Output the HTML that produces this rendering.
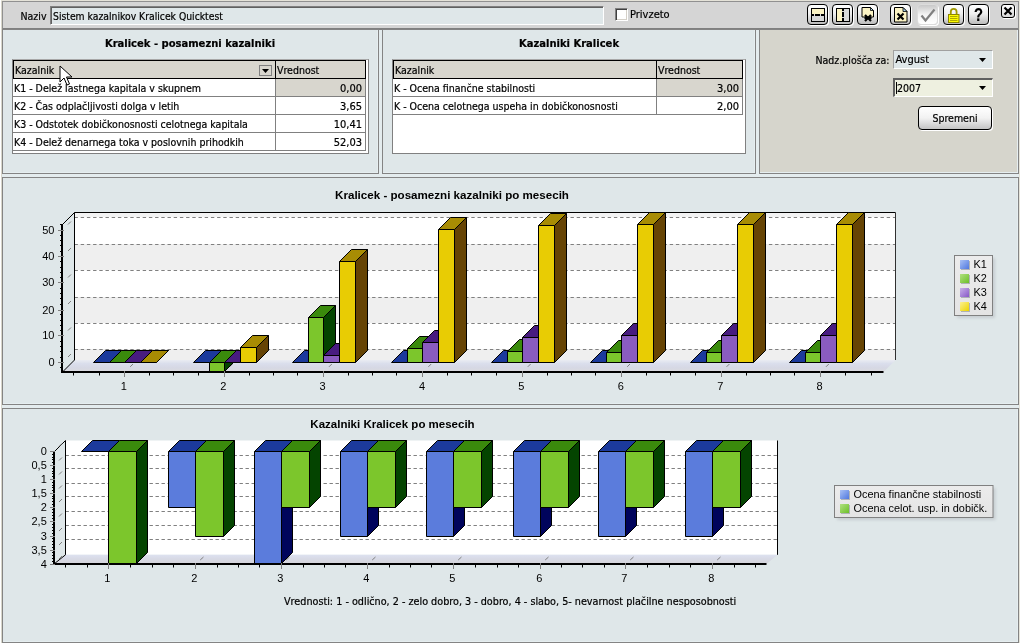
<!DOCTYPE html>
<html lang="sl"><head><meta charset="utf-8"><title>Sistem kazalnikov Kralicek Quicktest</title>
<style>
html,body{margin:0;padding:0}
body{width:1020px;height:643px;overflow:hidden;background:#d8d6ca;position:relative;font-family:"DejaVu Sans Condensed","Liberation Sans",sans-serif;font-size:10.5px;color:#000;-webkit-text-stroke:0.2px #000}
div{position:absolute;box-sizing:border-box;white-space:nowrap}
#root{left:0;top:0;width:1020px;height:643px;will-change:transform;overflow:hidden}
.panel{background:#dfe7e9;border:1px solid #848484;box-shadow:inset -1px -1px 0 #e6eef0}
.ttl{font-weight:bold;font-size:11.1px;text-align:center;font-family:"DejaVu Sans Condensed","Liberation Sans",sans-serif}
.grid{background:#fff;border:1px solid #808080;border-top-color:#a8a8a8}
.hd{background:#d8d6ce;border:1px solid #000;height:19px;line-height:18px;padding-left:1px}
.row{height:18px;line-height:19px;border-bottom:1px solid #808080;border-right:1px solid #808080;background:#fff;padding-left:1px}
.num{text-align:right;padding-right:3px;font-size:11px}
.tb{top:4px;width:21px;height:21px;border:1px solid #000;border-radius:4px;background:linear-gradient(#ffffff,#f0f0f0 45%,#bcbcbc);box-shadow:1px 1px 0 #fff}
.tb.dis{border-color:#dcdcdc;background:linear-gradient(#c8c8c8,#f4f4f4 50%,#fff)}
.tb svg{position:absolute;left:-1px;top:-1px}
.q{left:0;top:0;width:19px;height:19px;text-align:center;font:bold 18px/20px "Liberation Sans",sans-serif;transform:scaleX(0.82)}
.combo{height:19px;border:1px solid;border-color:#a0a0a0 #fff #fff #a0a0a0;line-height:18px;padding-left:2px}
</style></head><body><div id="root">

<div style="left:0;top:0;width:1px;height:643px;background:#fff"></div><div style="left:1px;top:0;width:1019px;height:1px;background:#e4e2d8"></div><div style="left:1019px;top:0;width:1px;height:643px;background:#e6e4da"></div><div style="left:2px;top:29px;width:1017px;height:614px;background:#e4ecee"></div><div style="left:2px;top:1px;width:1017px;height:29px;background:#d5d5d5;border:1px solid #909090;border-bottom:2px solid #808080"></div>
<div style="left:20.5px;top:9px;line-height:14px">Naziv</div>
<div style="left:50px;top:6px;width:554px;height:19px;background:#dfe7e9;border:1px solid;border-color:#808080 #fff #fff #808080;box-shadow:inset 1px 1px 0 #606060;line-height:18px;padding-left:2px;font-size:10.3px">Sistem kazalnikov Kralicek Quicktest</div>
<div style="left:615px;top:8px;width:13px;height:13px;background:#fff;border:1px solid;border-color:#808080 #fff #fff #808080;box-shadow:inset 1px 1px 0 #404040,inset -1px -1px 0 #d4d0c8"></div>
<div style="left:630px;top:8px;line-height:14px;font-size:11px">Privzeto</div>
<div class="tb" style="left:807px"><svg width="21" height="21" viewBox="0 0 21 21"><rect x="4.5" y="4.5" width="13" height="13" fill="#d8d8d8" stroke="#000"/><rect x="5" y="5" width="12" height="5" fill="#fbf3c4"/><path d="M5 11h2M8 11h5M14 11h3" stroke="#000" stroke-width="2" fill="none"/></svg></div>
<div class="tb" style="left:832px"><svg width="21" height="21" viewBox="0 0 21 21"><rect x="4.5" y="4.5" width="13" height="13" fill="#d8d8d8" stroke="#000"/><rect x="5" y="5" width="5" height="12" fill="#fbf3c4"/><path d="M11 5v2M11 8v5M11 14v3" stroke="#000" stroke-width="2" fill="none"/></svg></div>
<div class="tb" style="left:857px"><svg width="21" height="21" viewBox="0 0 21 21"><path d="M5 3.5h8.5l3 3v6.5h-11.5z" fill="#fbf3c4" stroke="#000"/><path d="M13.5 3.5v3h3z" fill="#a8d4ec" stroke="#000" stroke-width="0.8"/><path d="M8 11l6 6M14 11l-6 6M7.5 14h7" stroke="#000" stroke-width="2.2" fill="none"/></svg></div>
<div class="tb" style="left:890px"><svg width="21" height="21" viewBox="0 0 21 21"><path d="M4.5 3.5h8.5l4 4v10.5h-12.5z" fill="#fbf3c4" stroke="#000"/><path d="M13 3.5v4h4z" fill="#a8d4ec" stroke="#000" stroke-width="0.8"/><path d="M7.5 9.5l6 6M13.5 9.5l-6 6" stroke="#000" stroke-width="2.2" fill="none"/></svg></div>
<div class="tb dis" style="left:917px"><svg width="21" height="21" viewBox="0 0 21 21"><path d="M4.5 11.5l4 5L17.5 5.5" stroke="#808080" stroke-width="2.2" fill="none"/></svg></div>
<div class="tb" style="left:943px"><svg width="21" height="21" viewBox="0 0 21 21"><path d="M7.8 11V7.8a2.9 2.9 0 0 1 5.8 0V11" stroke="#a09800" stroke-width="1.8" fill="none"/><rect x="5.5" y="10.5" width="10.5" height="8" fill="#fcfc00" stroke="#8c8400" stroke-width="1"/><path d="M7 12.5h7.5M7 14.5h7.5M7 16.5h7.5" stroke="#b0a800" stroke-width="1"/></svg></div>
<div class="tb" style="left:968px"><div class="q">?</div></div>
<div style="left:1001px;top:4px;width:14px;height:14px;border:1px solid #000;border-radius:3px;background:linear-gradient(#fff,#d8d8d8);box-shadow:1px 1px 0 #fff"><svg width="12" height="12" viewBox="0 0 12 12" style="position:absolute;left:0;top:0"><path d="M2.5 2.5l7 7M9.5 2.5l-7 7" stroke="#000" stroke-width="2.2"/></svg></div>
<div class="panel" style="left:2px;top:29px;width:377px;height:145px"></div>
<div class="ttl" style="left:2px;top:37px;width:376px;line-height:14px">Kralicek - posamezni kazalniki</div>
<div class="grid" style="left:12px;top:59px;width:357px;height:95px"></div>
<div class="hd" style="left:13px;top:60px;width:263px">Kazalnik</div>
<div style="left:259px;top:65px;width:13px;height:11px;border:1px solid #808080;background:#d8d6ce"><svg width="11" height="9" style="position:absolute;left:0;top:0"><path d="M2 3h7l-3.5 4z" fill="#000"/></svg></div>
<div class="hd" style="left:275px;top:60px;width:91px;border-left-width:1px">Vrednost</div>
<div class="row" style="left:13px;top:79px;width:263px">K1 - Delež lastnega kapitala v skupnem</div>
<div class="row num" style="left:276px;top:79px;width:90px;background:#d8d6ce">0,00</div>
<div class="row" style="left:13px;top:97px;width:263px">K2 - Čas odplačljivosti dolga v letih</div>
<div class="row num" style="left:276px;top:97px;width:90px">3,65</div>
<div class="row" style="left:13px;top:115px;width:263px">K3 - Odstotek dobičkonosnosti celotnega kapitala</div>
<div class="row num" style="left:276px;top:115px;width:90px">10,41</div>
<div class="row" style="left:13px;top:133px;width:263px">K4 - Delež denarnega toka v poslovnih prihodkih</div>
<div class="row num" style="left:276px;top:133px;width:90px">52,03</div>
<svg style="position:absolute;left:59px;top:65px" width="14" height="22" viewBox="0 0 14 22"><path d="M1 1v16l4-4 3 7 2.5-1-3-7h5.5z" fill="#fff" stroke="#000" stroke-width="1"/></svg>
<div class="panel" style="left:382px;top:29px;width:374px;height:145px"></div>
<div class="ttl" style="left:382px;top:37px;width:374px;line-height:14px">Kazalniki Kralicek</div>
<div class="grid" style="left:392px;top:59px;width:354px;height:95px"></div>
<div class="hd" style="left:393px;top:60px;width:264px">Kazalnik</div>
<div class="hd" style="left:656px;top:60px;width:87px;border-left-width:1px">Vrednost</div>
<div class="row" style="left:393px;top:79px;width:264px">K - Ocena finančne stabilnosti</div>
<div class="row num" style="left:657px;top:79px;width:86px;background:#d8d6ce">3,00</div>
<div class="row" style="left:393px;top:97px;width:264px">K - Ocena celotnega uspeha in dobičkonosnosti</div>
<div class="row num" style="left:657px;top:97px;width:86px">2,00</div>
<div class="panel" style="left:759px;top:29px;width:260px;height:145px;background:#d6d5cc"></div>
<div style="left:815.5px;top:53px;line-height:14px">Nadz.plošča za:</div>
<div class="combo" style="left:893px;top:50px;width:100px;background:#dfe7e9;font-size:11px;padding-left:1.5px">Avgust</div>
<div class="combo" style="left:893px;top:78px;width:100px;background:#eef0e0;border-color:#606060 #fff #fff #606060;border-width:2px 1px 1px 2px;line-height:17px;padding-left:1px"><span style="border-left:1px solid #000;margin-left:0">2007</span></div>
<svg style="position:absolute;left:979px;top:58px" width="9" height="6"><path d="M0 0h7l-3.5 4z" fill="#000"/></svg>
<svg style="position:absolute;left:979px;top:86px" width="9" height="6"><path d="M0 0h7l-3.5 4z" fill="#000"/></svg>
<div style="left:918px;top:106px;width:74px;height:24px;border:1px solid #000;border-radius:4px;background:linear-gradient(#fff,#f2f2f2 50%,#c4c4c4);box-shadow:1px 1px 0 #fff;text-align:center;line-height:23px;font-size:10.5px">Spremeni</div>
<div class="panel" style="left:2px;top:177px;width:1017px;height:228px"></div>
<div class="panel" style="left:2px;top:408px;width:1017px;height:235px"></div>
<svg style="position:absolute;left:0;top:0" width="1020" height="643" viewBox="0 0 1020 643" font-family='"Liberation Sans",sans-serif' shape-rendering="auto">
<defs><filter id="blur1" x="-20%" y="-20%" width="150%" height="150%"><feGaussianBlur stdDeviation="1.5"/></filter></defs>
<rect x="74.5" y="212.5" width="821.0" height="147.5" fill="#ffffff"/>
<rect x="74.5" y="212.50" width="821.0" height="4.50" fill="#f3f3f3"/>
<rect x="74.5" y="244.00" width="821.0" height="26.00" fill="#efefef"/>
<rect x="74.5" y="297.00" width="821.0" height="26.00" fill="#efefef"/>
<rect x="74.5" y="349.00" width="821.0" height="11.00" fill="#efefef"/>
<line x1="74.50" y1="349.50" x2="895.50" y2="349.50" stroke="#808080" stroke-width="1" stroke-dasharray="3.4 2.8"/>
<line x1="74.50" y1="323.50" x2="895.50" y2="323.50" stroke="#808080" stroke-width="1" stroke-dasharray="3.4 2.8"/>
<line x1="74.50" y1="297.50" x2="895.50" y2="297.50" stroke="#808080" stroke-width="1" stroke-dasharray="3.4 2.8"/>
<line x1="74.50" y1="270.50" x2="895.50" y2="270.50" stroke="#808080" stroke-width="1" stroke-dasharray="3.4 2.8"/>
<line x1="74.50" y1="244.50" x2="895.50" y2="244.50" stroke="#808080" stroke-width="1" stroke-dasharray="3.4 2.8"/>
<line x1="74.50" y1="217.50" x2="895.50" y2="217.50" stroke="#808080" stroke-width="1" stroke-dasharray="3.4 2.8"/>
<defs><linearGradient id="fl1" x1="0" y1="0" x2="0" y2="1"><stop offset="0" stop-color="#eaecf2"/><stop offset="0.3" stop-color="#dadeec"/><stop offset="0.65" stop-color="#d6d8e4"/><stop offset="1" stop-color="#dadade"/></linearGradient></defs>
<polygon points="62.00,372.00 74.50,360.00 895.50,360.00 883.50,372.00" fill="url(#fl1)" />
<line x1="74.50" y1="212.50" x2="895.50" y2="212.50" stroke="#000" stroke-width="1" />
<line x1="74.50" y1="212.50" x2="74.50" y2="360.00" stroke="#000" stroke-width="1" />
<line x1="895.50" y1="212.50" x2="895.50" y2="360.00" stroke="#303030" stroke-width="1" />
<line x1="62.50" y1="224.50" x2="74.50" y2="212.50" stroke="#000" stroke-width="1" />
<line x1="62.50" y1="372.00" x2="74.50" y2="360.00" stroke="#000" stroke-width="1" />
<line x1="68.00" y1="357.00" x2="71.00" y2="354.00" stroke="#808080" stroke-width="1" />
<line x1="68.00" y1="330.50" x2="71.00" y2="327.50" stroke="#808080" stroke-width="1" />
<line x1="68.00" y1="304.00" x2="71.00" y2="301.00" stroke="#808080" stroke-width="1" />
<line x1="68.00" y1="277.50" x2="71.00" y2="274.50" stroke="#808080" stroke-width="1" />
<line x1="68.00" y1="251.00" x2="71.00" y2="248.00" stroke="#808080" stroke-width="1" />
<line x1="68.00" y1="224.50" x2="71.00" y2="221.50" stroke="#808080" stroke-width="1" />
<line x1="130.20" y1="366.80" x2="133.00" y2="364.00" stroke="#808080" stroke-width="1" />
<line x1="229.60" y1="366.80" x2="232.40" y2="364.00" stroke="#808080" stroke-width="1" />
<line x1="329.00" y1="366.80" x2="331.80" y2="364.00" stroke="#808080" stroke-width="1" />
<line x1="428.40" y1="366.80" x2="431.20" y2="364.00" stroke="#808080" stroke-width="1" />
<line x1="527.80" y1="366.80" x2="530.60" y2="364.00" stroke="#808080" stroke-width="1" />
<line x1="627.20" y1="366.80" x2="630.00" y2="364.00" stroke="#808080" stroke-width="1" />
<line x1="726.60" y1="366.80" x2="729.40" y2="364.00" stroke="#808080" stroke-width="1" />
<line x1="826.00" y1="366.80" x2="828.80" y2="364.00" stroke="#808080" stroke-width="1" />
<polygon points="109.50,362.50 121.50,350.50 121.50,350.50 109.50,362.50" fill="#0a1a5c" stroke="#000" stroke-width="1" stroke-linejoin="round" />
<polygon points="93.50,362.50 105.50,350.50 121.50,350.50 109.50,362.50" fill="#1c3a9c" stroke="#000" stroke-width="1" stroke-linejoin="round" />
<polygon points="124.50,362.50 136.50,350.50 136.50,350.50 124.50,362.50" fill="#044400" stroke="#000" stroke-width="1" stroke-linejoin="round" />
<polygon points="109.50,362.50 121.50,350.50 136.50,350.50 124.50,362.50" fill="#3a8a0c" stroke="#000" stroke-width="1" stroke-linejoin="round" />
<polygon points="140.50,362.50 152.50,350.50 152.50,350.50 140.50,362.50" fill="#2a0c50" stroke="#000" stroke-width="1" stroke-linejoin="round" />
<polygon points="124.50,362.50 136.50,350.50 152.50,350.50 140.50,362.50" fill="#481c80" stroke="#000" stroke-width="1" stroke-linejoin="round" />
<polygon points="156.50,362.50 168.50,350.50 168.50,350.50 156.50,362.50" fill="#664404" stroke="#000" stroke-width="1" stroke-linejoin="round" />
<polygon points="140.50,362.50 152.50,350.50 168.50,350.50 156.50,362.50" fill="#a88c04" stroke="#000" stroke-width="1" stroke-linejoin="round" />
<polygon points="209.50,362.50 221.50,350.50 221.50,350.50 209.50,362.50" fill="#0a1a5c" stroke="#000" stroke-width="1" stroke-linejoin="round" />
<polygon points="193.50,362.50 205.50,350.50 221.50,350.50 209.50,362.50" fill="#1c3a9c" stroke="#000" stroke-width="1" stroke-linejoin="round" />
<polygon points="224.50,362.50 236.50,350.50 236.50,359.50 224.50,371.50" fill="#044400" stroke="#000" stroke-width="1" stroke-linejoin="round" />
<polygon points="209.50,362.50 221.50,350.50 236.50,350.50 224.50,362.50" fill="#3a8a0c" stroke="#000" stroke-width="1" stroke-linejoin="round" />
<polygon points="209.50,362.50 224.50,362.50 224.50,371.50 209.50,371.50" fill="#7cc62c" stroke="#000" stroke-width="1" stroke-linejoin="round" />
<polygon points="240.50,362.50 252.50,350.50 252.50,350.50 240.50,362.50" fill="#2a0c50" stroke="#000" stroke-width="1" stroke-linejoin="round" />
<polygon points="224.50,362.50 236.50,350.50 252.50,350.50 240.50,362.50" fill="#481c80" stroke="#000" stroke-width="1" stroke-linejoin="round" />
<polygon points="256.50,347.50 268.50,335.50 268.50,350.50 256.50,362.50" fill="#664404" stroke="#000" stroke-width="1" stroke-linejoin="round" />
<polygon points="240.50,347.50 252.50,335.50 268.50,335.50 256.50,347.50" fill="#a88c04" stroke="#000" stroke-width="1" stroke-linejoin="round" />
<polygon points="240.50,347.50 256.50,347.50 256.50,362.50 240.50,362.50" fill="#e8cc04" stroke="#000" stroke-width="1" stroke-linejoin="round" />
<polygon points="308.50,362.50 320.50,350.50 320.50,350.50 308.50,362.50" fill="#0a1a5c" stroke="#000" stroke-width="1" stroke-linejoin="round" />
<polygon points="292.50,362.50 304.50,350.50 320.50,350.50 308.50,362.50" fill="#1c3a9c" stroke="#000" stroke-width="1" stroke-linejoin="round" />
<polygon points="323.50,317.50 335.50,305.50 335.50,350.50 323.50,362.50" fill="#044400" stroke="#000" stroke-width="1" stroke-linejoin="round" />
<polygon points="308.50,317.50 320.50,305.50 335.50,305.50 323.50,317.50" fill="#3a8a0c" stroke="#000" stroke-width="1" stroke-linejoin="round" />
<polygon points="308.50,317.50 323.50,317.50 323.50,362.50 308.50,362.50" fill="#7cc62c" stroke="#000" stroke-width="1" stroke-linejoin="round" />
<polygon points="339.50,355.50 351.50,343.50 351.50,350.50 339.50,362.50" fill="#2a0c50" stroke="#000" stroke-width="1" stroke-linejoin="round" />
<polygon points="323.50,355.50 335.50,343.50 351.50,343.50 339.50,355.50" fill="#481c80" stroke="#000" stroke-width="1" stroke-linejoin="round" />
<polygon points="323.50,355.50 339.50,355.50 339.50,362.50 323.50,362.50" fill="#8a5cc0" stroke="#000" stroke-width="1" stroke-linejoin="round" />
<polygon points="355.50,261.50 367.50,249.50 367.50,350.50 355.50,362.50" fill="#664404" stroke="#000" stroke-width="1" stroke-linejoin="round" />
<polygon points="339.50,261.50 351.50,249.50 367.50,249.50 355.50,261.50" fill="#a88c04" stroke="#000" stroke-width="1" stroke-linejoin="round" />
<polygon points="339.50,261.50 355.50,261.50 355.50,362.50 339.50,362.50" fill="#e8cc04" stroke="#000" stroke-width="1" stroke-linejoin="round" />
<polygon points="407.50,362.50 419.50,350.50 419.50,350.50 407.50,362.50" fill="#0a1a5c" stroke="#000" stroke-width="1" stroke-linejoin="round" />
<polygon points="391.50,362.50 403.50,350.50 419.50,350.50 407.50,362.50" fill="#1c3a9c" stroke="#000" stroke-width="1" stroke-linejoin="round" />
<polygon points="422.50,348.50 434.50,336.50 434.50,350.50 422.50,362.50" fill="#044400" stroke="#000" stroke-width="1" stroke-linejoin="round" />
<polygon points="407.50,348.50 419.50,336.50 434.50,336.50 422.50,348.50" fill="#3a8a0c" stroke="#000" stroke-width="1" stroke-linejoin="round" />
<polygon points="407.50,348.50 422.50,348.50 422.50,362.50 407.50,362.50" fill="#7cc62c" stroke="#000" stroke-width="1" stroke-linejoin="round" />
<polygon points="438.50,342.50 450.50,330.50 450.50,350.50 438.50,362.50" fill="#2a0c50" stroke="#000" stroke-width="1" stroke-linejoin="round" />
<polygon points="422.50,342.50 434.50,330.50 450.50,330.50 438.50,342.50" fill="#481c80" stroke="#000" stroke-width="1" stroke-linejoin="round" />
<polygon points="422.50,342.50 438.50,342.50 438.50,362.50 422.50,362.50" fill="#8a5cc0" stroke="#000" stroke-width="1" stroke-linejoin="round" />
<polygon points="454.50,229.50 466.50,217.50 466.50,350.50 454.50,362.50" fill="#664404" stroke="#000" stroke-width="1" stroke-linejoin="round" />
<polygon points="438.50,229.50 450.50,217.50 466.50,217.50 454.50,229.50" fill="#a88c04" stroke="#000" stroke-width="1" stroke-linejoin="round" />
<polygon points="438.50,229.50 454.50,229.50 454.50,362.50 438.50,362.50" fill="#e8cc04" stroke="#000" stroke-width="1" stroke-linejoin="round" />
<polygon points="507.50,362.50 519.50,350.50 519.50,350.50 507.50,362.50" fill="#0a1a5c" stroke="#000" stroke-width="1" stroke-linejoin="round" />
<polygon points="491.50,362.50 503.50,350.50 519.50,350.50 507.50,362.50" fill="#1c3a9c" stroke="#000" stroke-width="1" stroke-linejoin="round" />
<polygon points="522.50,351.50 534.50,339.50 534.50,350.50 522.50,362.50" fill="#044400" stroke="#000" stroke-width="1" stroke-linejoin="round" />
<polygon points="507.50,351.50 519.50,339.50 534.50,339.50 522.50,351.50" fill="#3a8a0c" stroke="#000" stroke-width="1" stroke-linejoin="round" />
<polygon points="507.50,351.50 522.50,351.50 522.50,362.50 507.50,362.50" fill="#7cc62c" stroke="#000" stroke-width="1" stroke-linejoin="round" />
<polygon points="538.50,337.50 550.50,325.50 550.50,350.50 538.50,362.50" fill="#2a0c50" stroke="#000" stroke-width="1" stroke-linejoin="round" />
<polygon points="522.50,337.50 534.50,325.50 550.50,325.50 538.50,337.50" fill="#481c80" stroke="#000" stroke-width="1" stroke-linejoin="round" />
<polygon points="522.50,337.50 538.50,337.50 538.50,362.50 522.50,362.50" fill="#8a5cc0" stroke="#000" stroke-width="1" stroke-linejoin="round" />
<polygon points="554.50,225.50 566.50,213.50 566.50,350.50 554.50,362.50" fill="#664404" stroke="#000" stroke-width="1" stroke-linejoin="round" />
<polygon points="538.50,225.50 550.50,213.50 566.50,213.50 554.50,225.50" fill="#a88c04" stroke="#000" stroke-width="1" stroke-linejoin="round" />
<polygon points="538.50,225.50 554.50,225.50 554.50,362.50 538.50,362.50" fill="#e8cc04" stroke="#000" stroke-width="1" stroke-linejoin="round" />
<polygon points="606.50,362.50 618.50,350.50 618.50,350.50 606.50,362.50" fill="#0a1a5c" stroke="#000" stroke-width="1" stroke-linejoin="round" />
<polygon points="590.50,362.50 602.50,350.50 618.50,350.50 606.50,362.50" fill="#1c3a9c" stroke="#000" stroke-width="1" stroke-linejoin="round" />
<polygon points="621.50,352.50 633.50,340.50 633.50,350.50 621.50,362.50" fill="#044400" stroke="#000" stroke-width="1" stroke-linejoin="round" />
<polygon points="606.50,352.50 618.50,340.50 633.50,340.50 621.50,352.50" fill="#3a8a0c" stroke="#000" stroke-width="1" stroke-linejoin="round" />
<polygon points="606.50,352.50 621.50,352.50 621.50,362.50 606.50,362.50" fill="#7cc62c" stroke="#000" stroke-width="1" stroke-linejoin="round" />
<polygon points="637.50,335.50 649.50,323.50 649.50,350.50 637.50,362.50" fill="#2a0c50" stroke="#000" stroke-width="1" stroke-linejoin="round" />
<polygon points="621.50,335.50 633.50,323.50 649.50,323.50 637.50,335.50" fill="#481c80" stroke="#000" stroke-width="1" stroke-linejoin="round" />
<polygon points="621.50,335.50 637.50,335.50 637.50,362.50 621.50,362.50" fill="#8a5cc0" stroke="#000" stroke-width="1" stroke-linejoin="round" />
<polygon points="653.50,224.50 665.50,212.50 665.50,350.50 653.50,362.50" fill="#664404" stroke="#000" stroke-width="1" stroke-linejoin="round" />
<polygon points="637.50,224.50 649.50,212.50 665.50,212.50 653.50,224.50" fill="#a88c04" stroke="#000" stroke-width="1" stroke-linejoin="round" />
<polygon points="637.50,224.50 653.50,224.50 653.50,362.50 637.50,362.50" fill="#e8cc04" stroke="#000" stroke-width="1" stroke-linejoin="round" />
<polygon points="706.50,362.50 718.50,350.50 718.50,350.50 706.50,362.50" fill="#0a1a5c" stroke="#000" stroke-width="1" stroke-linejoin="round" />
<polygon points="690.50,362.50 702.50,350.50 718.50,350.50 706.50,362.50" fill="#1c3a9c" stroke="#000" stroke-width="1" stroke-linejoin="round" />
<polygon points="721.50,352.50 733.50,340.50 733.50,350.50 721.50,362.50" fill="#044400" stroke="#000" stroke-width="1" stroke-linejoin="round" />
<polygon points="706.50,352.50 718.50,340.50 733.50,340.50 721.50,352.50" fill="#3a8a0c" stroke="#000" stroke-width="1" stroke-linejoin="round" />
<polygon points="706.50,352.50 721.50,352.50 721.50,362.50 706.50,362.50" fill="#7cc62c" stroke="#000" stroke-width="1" stroke-linejoin="round" />
<polygon points="737.50,335.50 749.50,323.50 749.50,350.50 737.50,362.50" fill="#2a0c50" stroke="#000" stroke-width="1" stroke-linejoin="round" />
<polygon points="721.50,335.50 733.50,323.50 749.50,323.50 737.50,335.50" fill="#481c80" stroke="#000" stroke-width="1" stroke-linejoin="round" />
<polygon points="721.50,335.50 737.50,335.50 737.50,362.50 721.50,362.50" fill="#8a5cc0" stroke="#000" stroke-width="1" stroke-linejoin="round" />
<polygon points="753.50,224.50 765.50,212.50 765.50,350.50 753.50,362.50" fill="#664404" stroke="#000" stroke-width="1" stroke-linejoin="round" />
<polygon points="737.50,224.50 749.50,212.50 765.50,212.50 753.50,224.50" fill="#a88c04" stroke="#000" stroke-width="1" stroke-linejoin="round" />
<polygon points="737.50,224.50 753.50,224.50 753.50,362.50 737.50,362.50" fill="#e8cc04" stroke="#000" stroke-width="1" stroke-linejoin="round" />
<polygon points="805.50,362.50 817.50,350.50 817.50,350.50 805.50,362.50" fill="#0a1a5c" stroke="#000" stroke-width="1" stroke-linejoin="round" />
<polygon points="789.50,362.50 801.50,350.50 817.50,350.50 805.50,362.50" fill="#1c3a9c" stroke="#000" stroke-width="1" stroke-linejoin="round" />
<polygon points="820.50,352.50 832.50,340.50 832.50,350.50 820.50,362.50" fill="#044400" stroke="#000" stroke-width="1" stroke-linejoin="round" />
<polygon points="805.50,352.50 817.50,340.50 832.50,340.50 820.50,352.50" fill="#3a8a0c" stroke="#000" stroke-width="1" stroke-linejoin="round" />
<polygon points="805.50,352.50 820.50,352.50 820.50,362.50 805.50,362.50" fill="#7cc62c" stroke="#000" stroke-width="1" stroke-linejoin="round" />
<polygon points="836.50,335.50 848.50,323.50 848.50,350.50 836.50,362.50" fill="#2a0c50" stroke="#000" stroke-width="1" stroke-linejoin="round" />
<polygon points="820.50,335.50 832.50,323.50 848.50,323.50 836.50,335.50" fill="#481c80" stroke="#000" stroke-width="1" stroke-linejoin="round" />
<polygon points="820.50,335.50 836.50,335.50 836.50,362.50 820.50,362.50" fill="#8a5cc0" stroke="#000" stroke-width="1" stroke-linejoin="round" />
<polygon points="852.50,224.50 864.50,212.50 864.50,350.50 852.50,362.50" fill="#664404" stroke="#000" stroke-width="1" stroke-linejoin="round" />
<polygon points="836.50,224.50 848.50,212.50 864.50,212.50 852.50,224.50" fill="#a88c04" stroke="#000" stroke-width="1" stroke-linejoin="round" />
<polygon points="836.50,224.50 852.50,224.50 852.50,362.50 836.50,362.50" fill="#e8cc04" stroke="#000" stroke-width="1" stroke-linejoin="round" />
<line x1="62.00" y1="224.00" x2="62.00" y2="373.00" stroke="#000" stroke-width="2" />
<line x1="61.00" y1="372.00" x2="883.50" y2="372.00" stroke="#000" stroke-width="2" />
<line x1="58.00" y1="362.50" x2="64.00" y2="362.50" stroke="#808080" stroke-width="1" />
<text x="54.50" y="365.90" font-size="11" text-anchor="end" font-weight="normal" fill="#000" >0</text>
<line x1="58.00" y1="335.50" x2="64.00" y2="335.50" stroke="#808080" stroke-width="1" />
<text x="54.50" y="338.90" font-size="11" text-anchor="end" font-weight="normal" fill="#000" >10</text>
<line x1="58.00" y1="310.50" x2="64.00" y2="310.50" stroke="#808080" stroke-width="1" />
<text x="54.50" y="313.90" font-size="11" text-anchor="end" font-weight="normal" fill="#000" >20</text>
<line x1="58.00" y1="282.50" x2="64.00" y2="282.50" stroke="#808080" stroke-width="1" />
<text x="54.50" y="285.90" font-size="11" text-anchor="end" font-weight="normal" fill="#000" >30</text>
<line x1="58.00" y1="256.50" x2="64.00" y2="256.50" stroke="#808080" stroke-width="1" />
<text x="54.50" y="259.90" font-size="11" text-anchor="end" font-weight="normal" fill="#000" >40</text>
<line x1="58.00" y1="230.50" x2="64.00" y2="230.50" stroke="#808080" stroke-width="1" />
<text x="54.50" y="233.90" font-size="11" text-anchor="end" font-weight="normal" fill="#000" >50</text>
<line x1="60.00" y1="367.50" x2="62.00" y2="367.50" stroke="#000" stroke-width="1" />
<line x1="60.00" y1="357.50" x2="62.00" y2="357.50" stroke="#000" stroke-width="1" />
<line x1="60.00" y1="351.50" x2="62.00" y2="351.50" stroke="#000" stroke-width="1" />
<line x1="60.00" y1="346.50" x2="62.00" y2="346.50" stroke="#000" stroke-width="1" />
<line x1="60.00" y1="341.50" x2="62.00" y2="341.50" stroke="#000" stroke-width="1" />
<line x1="60.00" y1="330.50" x2="62.00" y2="330.50" stroke="#000" stroke-width="1" />
<line x1="60.00" y1="325.50" x2="62.00" y2="325.50" stroke="#000" stroke-width="1" />
<line x1="60.00" y1="320.50" x2="62.00" y2="320.50" stroke="#000" stroke-width="1" />
<line x1="60.00" y1="314.50" x2="62.00" y2="314.50" stroke="#000" stroke-width="1" />
<line x1="60.00" y1="304.50" x2="62.00" y2="304.50" stroke="#000" stroke-width="1" />
<line x1="60.00" y1="298.50" x2="62.00" y2="298.50" stroke="#000" stroke-width="1" />
<line x1="60.00" y1="293.50" x2="62.00" y2="293.50" stroke="#000" stroke-width="1" />
<line x1="60.00" y1="288.50" x2="62.00" y2="288.50" stroke="#000" stroke-width="1" />
<line x1="60.00" y1="277.50" x2="62.00" y2="277.50" stroke="#000" stroke-width="1" />
<line x1="60.00" y1="272.50" x2="62.00" y2="272.50" stroke="#000" stroke-width="1" />
<line x1="60.00" y1="267.50" x2="62.00" y2="267.50" stroke="#000" stroke-width="1" />
<line x1="60.00" y1="261.50" x2="62.00" y2="261.50" stroke="#000" stroke-width="1" />
<line x1="60.00" y1="251.50" x2="62.00" y2="251.50" stroke="#000" stroke-width="1" />
<line x1="60.00" y1="245.50" x2="62.00" y2="245.50" stroke="#000" stroke-width="1" />
<line x1="60.00" y1="240.50" x2="62.00" y2="240.50" stroke="#000" stroke-width="1" />
<line x1="60.00" y1="235.50" x2="62.00" y2="235.50" stroke="#000" stroke-width="1" />
<line x1="60.00" y1="224.50" x2="62.00" y2="224.50" stroke="#000" stroke-width="1" />
<line x1="124.50" y1="371.00" x2="124.50" y2="377.00" stroke="#808080" stroke-width="1" />
<text x="123.80" y="389.60" font-size="11" text-anchor="middle" font-weight="normal" fill="#000" >1</text>
<line x1="149.50" y1="373.00" x2="149.50" y2="375.50" stroke="#000" stroke-width="1" />
<line x1="173.50" y1="373.00" x2="173.50" y2="375.50" stroke="#000" stroke-width="1" />
<line x1="99.50" y1="373.00" x2="99.50" y2="375.50" stroke="#000" stroke-width="1" />
<line x1="73.50" y1="373.00" x2="73.50" y2="375.50" stroke="#000" stroke-width="1" />
<line x1="198.50" y1="373.00" x2="198.50" y2="375.50" stroke="#000" stroke-width="1" />
<line x1="224.50" y1="371.00" x2="224.50" y2="377.00" stroke="#808080" stroke-width="1" />
<text x="223.20" y="389.60" font-size="11" text-anchor="middle" font-weight="normal" fill="#000" >2</text>
<line x1="249.50" y1="373.00" x2="249.50" y2="375.50" stroke="#000" stroke-width="1" />
<line x1="273.50" y1="373.00" x2="273.50" y2="375.50" stroke="#000" stroke-width="1" />
<line x1="297.50" y1="373.00" x2="297.50" y2="375.50" stroke="#000" stroke-width="1" />
<line x1="323.50" y1="371.00" x2="323.50" y2="377.00" stroke="#808080" stroke-width="1" />
<text x="322.60" y="389.60" font-size="11" text-anchor="middle" font-weight="normal" fill="#000" >3</text>
<line x1="348.50" y1="373.00" x2="348.50" y2="375.50" stroke="#000" stroke-width="1" />
<line x1="372.50" y1="373.00" x2="372.50" y2="375.50" stroke="#000" stroke-width="1" />
<line x1="396.50" y1="373.00" x2="396.50" y2="375.50" stroke="#000" stroke-width="1" />
<line x1="422.50" y1="371.00" x2="422.50" y2="377.00" stroke="#808080" stroke-width="1" />
<text x="422.00" y="389.60" font-size="11" text-anchor="middle" font-weight="normal" fill="#000" >4</text>
<line x1="447.50" y1="373.00" x2="447.50" y2="375.50" stroke="#000" stroke-width="1" />
<line x1="471.50" y1="373.00" x2="471.50" y2="375.50" stroke="#000" stroke-width="1" />
<line x1="496.50" y1="373.00" x2="496.50" y2="375.50" stroke="#000" stroke-width="1" />
<line x1="522.50" y1="371.00" x2="522.50" y2="377.00" stroke="#808080" stroke-width="1" />
<text x="521.40" y="389.60" font-size="11" text-anchor="middle" font-weight="normal" fill="#000" >5</text>
<line x1="547.50" y1="373.00" x2="547.50" y2="375.50" stroke="#000" stroke-width="1" />
<line x1="571.50" y1="373.00" x2="571.50" y2="375.50" stroke="#000" stroke-width="1" />
<line x1="595.50" y1="373.00" x2="595.50" y2="375.50" stroke="#000" stroke-width="1" />
<line x1="621.50" y1="371.00" x2="621.50" y2="377.00" stroke="#808080" stroke-width="1" />
<text x="620.80" y="389.60" font-size="11" text-anchor="middle" font-weight="normal" fill="#000" >6</text>
<line x1="646.50" y1="373.00" x2="646.50" y2="375.50" stroke="#000" stroke-width="1" />
<line x1="670.50" y1="373.00" x2="670.50" y2="375.50" stroke="#000" stroke-width="1" />
<line x1="695.50" y1="373.00" x2="695.50" y2="375.50" stroke="#000" stroke-width="1" />
<line x1="721.50" y1="371.00" x2="721.50" y2="377.00" stroke="#808080" stroke-width="1" />
<text x="720.20" y="389.60" font-size="11" text-anchor="middle" font-weight="normal" fill="#000" >7</text>
<line x1="746.50" y1="373.00" x2="746.50" y2="375.50" stroke="#000" stroke-width="1" />
<line x1="770.50" y1="373.00" x2="770.50" y2="375.50" stroke="#000" stroke-width="1" />
<line x1="794.50" y1="373.00" x2="794.50" y2="375.50" stroke="#000" stroke-width="1" />
<line x1="820.50" y1="371.00" x2="820.50" y2="377.00" stroke="#808080" stroke-width="1" />
<text x="819.60" y="389.60" font-size="11" text-anchor="middle" font-weight="normal" fill="#000" >8</text>
<line x1="845.50" y1="373.00" x2="845.50" y2="375.50" stroke="#000" stroke-width="1" />
<line x1="871.50" y1="373.00" x2="871.50" y2="375.50" stroke="#000" stroke-width="1" />
<text x="452.00" y="198.50" font-size="11.6" text-anchor="middle" font-weight="bold" fill="#000" >Kralicek - posamezni kazalniki po mesecih</text>
<defs><linearGradient id="lg1" x1="0" y1="0" x2="0" y2="1"><stop offset="0" stop-color="#ececec"/><stop offset="1" stop-color="#e4e4e4"/></linearGradient></defs>
<rect x="957" y="258" width="38" height="60" fill="#c4cace" opacity="0.9" filter="url(#blur1)"/>
<rect x="954.5" y="255.5" width="38" height="60" fill="url(#lg1)" stroke="#808080" stroke-width="1"/>
<defs><linearGradient id="lg1s0" x1="0" y1="0" x2="1" y2="1"><stop offset="0" stop-color="#a8c0f4"/><stop offset="1" stop-color="#5078e0"/></linearGradient></defs>
<rect x="961" y="261" width="9" height="9" fill="#a0a4a8" opacity="0.8"/>
<rect x="960" y="260" width="9" height="9" fill="url(#lg1s0)"/>
<text x="973.50" y="268.30" font-size="10.9" text-anchor="start" font-weight="normal" fill="#000" >K1</text>
<defs><linearGradient id="lg1s1" x1="0" y1="0" x2="1" y2="1"><stop offset="0" stop-color="#b0e080"/><stop offset="1" stop-color="#6cc028"/></linearGradient></defs>
<rect x="961" y="275" width="9" height="9" fill="#a0a4a8" opacity="0.8"/>
<rect x="960" y="274" width="9" height="9" fill="url(#lg1s1)"/>
<text x="973.50" y="282.30" font-size="10.9" text-anchor="start" font-weight="normal" fill="#000" >K2</text>
<defs><linearGradient id="lg1s2" x1="0" y1="0" x2="1" y2="1"><stop offset="0" stop-color="#c8b0e8"/><stop offset="1" stop-color="#8858c8"/></linearGradient></defs>
<rect x="961" y="289" width="9" height="9" fill="#a0a4a8" opacity="0.8"/>
<rect x="960" y="288" width="9" height="9" fill="url(#lg1s2)"/>
<text x="973.50" y="296.30" font-size="10.9" text-anchor="start" font-weight="normal" fill="#000" >K3</text>
<defs><linearGradient id="lg1s3" x1="0" y1="0" x2="1" y2="1"><stop offset="0" stop-color="#fcf090"/><stop offset="1" stop-color="#ecd400"/></linearGradient></defs>
<rect x="961" y="303" width="9" height="9" fill="#a0a4a8" opacity="0.8"/>
<rect x="960" y="302" width="9" height="9" fill="url(#lg1s3)"/>
<text x="973.50" y="310.30" font-size="10.9" text-anchor="start" font-weight="normal" fill="#000" >K4</text>
<rect x="65.5" y="440.5" width="712.0" height="114.29999999999995" fill="#ffffff"/>
<line x1="65.50" y1="455.50" x2="777.50" y2="455.50" stroke="#808080" stroke-width="1" stroke-dasharray="3.4 2.6"/>
<line x1="65.50" y1="468.50" x2="777.50" y2="468.50" stroke="#808080" stroke-width="1" stroke-dasharray="3.4 2.6"/>
<line x1="65.50" y1="483.50" x2="777.50" y2="483.50" stroke="#808080" stroke-width="1" stroke-dasharray="3.4 2.6"/>
<line x1="65.50" y1="496.50" x2="777.50" y2="496.50" stroke="#808080" stroke-width="1" stroke-dasharray="3.4 2.6"/>
<line x1="65.50" y1="511.50" x2="777.50" y2="511.50" stroke="#808080" stroke-width="1" stroke-dasharray="3.4 2.6"/>
<line x1="65.50" y1="525.50" x2="777.50" y2="525.50" stroke="#808080" stroke-width="1" stroke-dasharray="3.4 2.6"/>
<line x1="65.50" y1="539.50" x2="777.50" y2="539.50" stroke="#808080" stroke-width="1" stroke-dasharray="3.4 2.6"/>
<defs><linearGradient id="fl2" x1="0" y1="0" x2="0" y2="1"><stop offset="0" stop-color="#dde1f0"/><stop offset="0.4" stop-color="#d8dae6"/><stop offset="1" stop-color="#d4d4da"/></linearGradient></defs>
<polygon points="54.00,564.00 65.50,554.80 777.50,554.80 766.50,564.00" fill="url(#fl2)" />
<line x1="65.50" y1="440.50" x2="65.50" y2="554.80" stroke="#000" stroke-width="1" />
<line x1="777.50" y1="440.50" x2="777.50" y2="554.80" stroke="#000" stroke-width="1" />
<line x1="54.50" y1="451.50" x2="65.50" y2="440.50" stroke="#000" stroke-width="1" />
<line x1="54.00" y1="564.00" x2="65.50" y2="554.80" stroke="#000" stroke-width="1" />
<line x1="59.00" y1="446.50" x2="62.00" y2="443.50" stroke="#808080" stroke-width="1" />
<line x1="59.00" y1="460.50" x2="62.00" y2="457.50" stroke="#808080" stroke-width="1" />
<line x1="59.00" y1="474.50" x2="62.00" y2="471.50" stroke="#808080" stroke-width="1" />
<line x1="59.00" y1="488.50" x2="62.00" y2="485.50" stroke="#808080" stroke-width="1" />
<line x1="59.00" y1="502.00" x2="62.00" y2="499.00" stroke="#808080" stroke-width="1" />
<line x1="59.00" y1="516.50" x2="62.00" y2="513.50" stroke="#808080" stroke-width="1" />
<line x1="59.00" y1="531.00" x2="62.00" y2="528.00" stroke="#808080" stroke-width="1" />
<line x1="59.00" y1="545.00" x2="62.00" y2="542.00" stroke="#808080" stroke-width="1" />
<line x1="59.00" y1="559.00" x2="62.00" y2="556.00" stroke="#808080" stroke-width="1" />
<line x1="113.20" y1="560.00" x2="116.50" y2="557.00" stroke="#808080" stroke-width="1" />
<line x1="200.20" y1="560.00" x2="203.50" y2="557.00" stroke="#808080" stroke-width="1" />
<line x1="286.20" y1="560.00" x2="289.50" y2="557.00" stroke="#808080" stroke-width="1" />
<line x1="372.20" y1="560.00" x2="375.50" y2="557.00" stroke="#808080" stroke-width="1" />
<line x1="458.20" y1="560.00" x2="461.50" y2="557.00" stroke="#808080" stroke-width="1" />
<line x1="545.20" y1="560.00" x2="548.50" y2="557.00" stroke="#808080" stroke-width="1" />
<line x1="630.20" y1="560.00" x2="633.50" y2="557.00" stroke="#808080" stroke-width="1" />
<line x1="717.20" y1="560.00" x2="720.50" y2="557.00" stroke="#808080" stroke-width="1" />
<polygon points="81.50,451.50 92.50,440.50 119.50,440.50 108.50,451.50" fill="#1c3a9c" stroke="#000" stroke-width="1" stroke-linejoin="round" />
<polygon points="136.50,451.50 147.50,440.50 147.50,552.50 136.50,563.50" fill="#044400" stroke="#000" stroke-width="1" stroke-linejoin="round" />
<polygon points="108.50,451.50 119.50,440.50 147.50,440.50 136.50,451.50" fill="#3a8a0c" stroke="#000" stroke-width="1" stroke-linejoin="round" />
<polygon points="108.50,451.50 136.50,451.50 136.50,563.50 108.50,563.50" fill="#7cc62c" stroke="#000" stroke-width="1" stroke-linejoin="round" />
<polygon points="195.50,451.50 206.50,440.50 206.50,496.50 195.50,507.50" fill="#00045c" stroke="#000" stroke-width="1" stroke-linejoin="round" />
<polygon points="168.50,451.50 179.50,440.50 206.50,440.50 195.50,451.50" fill="#1c3a9c" stroke="#000" stroke-width="1" stroke-linejoin="round" />
<polygon points="168.50,451.50 195.50,451.50 195.50,507.50 168.50,507.50" fill="#5b7cdc" stroke="#000" stroke-width="1" stroke-linejoin="round" />
<polygon points="223.50,451.50 234.50,440.50 234.50,525.50 223.50,536.50" fill="#044400" stroke="#000" stroke-width="1" stroke-linejoin="round" />
<polygon points="195.50,451.50 206.50,440.50 234.50,440.50 223.50,451.50" fill="#3a8a0c" stroke="#000" stroke-width="1" stroke-linejoin="round" />
<polygon points="195.50,451.50 223.50,451.50 223.50,536.50 195.50,536.50" fill="#7cc62c" stroke="#000" stroke-width="1" stroke-linejoin="round" />
<polygon points="281.50,451.50 292.50,440.50 292.50,552.50 281.50,563.50" fill="#00045c" stroke="#000" stroke-width="1" stroke-linejoin="round" />
<polygon points="254.50,451.50 265.50,440.50 292.50,440.50 281.50,451.50" fill="#1c3a9c" stroke="#000" stroke-width="1" stroke-linejoin="round" />
<polygon points="254.50,451.50 281.50,451.50 281.50,563.50 254.50,563.50" fill="#5b7cdc" stroke="#000" stroke-width="1" stroke-linejoin="round" />
<polygon points="309.50,451.50 320.50,440.50 320.50,496.50 309.50,507.50" fill="#044400" stroke="#000" stroke-width="1" stroke-linejoin="round" />
<polygon points="281.50,451.50 292.50,440.50 320.50,440.50 309.50,451.50" fill="#3a8a0c" stroke="#000" stroke-width="1" stroke-linejoin="round" />
<polygon points="281.50,451.50 309.50,451.50 309.50,507.50 281.50,507.50" fill="#7cc62c" stroke="#000" stroke-width="1" stroke-linejoin="round" />
<polygon points="367.50,451.50 378.50,440.50 378.50,525.50 367.50,536.50" fill="#00045c" stroke="#000" stroke-width="1" stroke-linejoin="round" />
<polygon points="340.50,451.50 351.50,440.50 378.50,440.50 367.50,451.50" fill="#1c3a9c" stroke="#000" stroke-width="1" stroke-linejoin="round" />
<polygon points="340.50,451.50 367.50,451.50 367.50,536.50 340.50,536.50" fill="#5b7cdc" stroke="#000" stroke-width="1" stroke-linejoin="round" />
<polygon points="395.50,451.50 406.50,440.50 406.50,496.50 395.50,507.50" fill="#044400" stroke="#000" stroke-width="1" stroke-linejoin="round" />
<polygon points="367.50,451.50 378.50,440.50 406.50,440.50 395.50,451.50" fill="#3a8a0c" stroke="#000" stroke-width="1" stroke-linejoin="round" />
<polygon points="367.50,451.50 395.50,451.50 395.50,507.50 367.50,507.50" fill="#7cc62c" stroke="#000" stroke-width="1" stroke-linejoin="round" />
<polygon points="453.50,451.50 464.50,440.50 464.50,525.50 453.50,536.50" fill="#00045c" stroke="#000" stroke-width="1" stroke-linejoin="round" />
<polygon points="426.50,451.50 437.50,440.50 464.50,440.50 453.50,451.50" fill="#1c3a9c" stroke="#000" stroke-width="1" stroke-linejoin="round" />
<polygon points="426.50,451.50 453.50,451.50 453.50,536.50 426.50,536.50" fill="#5b7cdc" stroke="#000" stroke-width="1" stroke-linejoin="round" />
<polygon points="481.50,451.50 492.50,440.50 492.50,496.50 481.50,507.50" fill="#044400" stroke="#000" stroke-width="1" stroke-linejoin="round" />
<polygon points="453.50,451.50 464.50,440.50 492.50,440.50 481.50,451.50" fill="#3a8a0c" stroke="#000" stroke-width="1" stroke-linejoin="round" />
<polygon points="453.50,451.50 481.50,451.50 481.50,507.50 453.50,507.50" fill="#7cc62c" stroke="#000" stroke-width="1" stroke-linejoin="round" />
<polygon points="540.50,451.50 551.50,440.50 551.50,525.50 540.50,536.50" fill="#00045c" stroke="#000" stroke-width="1" stroke-linejoin="round" />
<polygon points="513.50,451.50 524.50,440.50 551.50,440.50 540.50,451.50" fill="#1c3a9c" stroke="#000" stroke-width="1" stroke-linejoin="round" />
<polygon points="513.50,451.50 540.50,451.50 540.50,536.50 513.50,536.50" fill="#5b7cdc" stroke="#000" stroke-width="1" stroke-linejoin="round" />
<polygon points="568.50,451.50 579.50,440.50 579.50,496.50 568.50,507.50" fill="#044400" stroke="#000" stroke-width="1" stroke-linejoin="round" />
<polygon points="540.50,451.50 551.50,440.50 579.50,440.50 568.50,451.50" fill="#3a8a0c" stroke="#000" stroke-width="1" stroke-linejoin="round" />
<polygon points="540.50,451.50 568.50,451.50 568.50,507.50 540.50,507.50" fill="#7cc62c" stroke="#000" stroke-width="1" stroke-linejoin="round" />
<polygon points="625.50,451.50 636.50,440.50 636.50,525.50 625.50,536.50" fill="#00045c" stroke="#000" stroke-width="1" stroke-linejoin="round" />
<polygon points="598.50,451.50 609.50,440.50 636.50,440.50 625.50,451.50" fill="#1c3a9c" stroke="#000" stroke-width="1" stroke-linejoin="round" />
<polygon points="598.50,451.50 625.50,451.50 625.50,536.50 598.50,536.50" fill="#5b7cdc" stroke="#000" stroke-width="1" stroke-linejoin="round" />
<polygon points="653.50,451.50 664.50,440.50 664.50,496.50 653.50,507.50" fill="#044400" stroke="#000" stroke-width="1" stroke-linejoin="round" />
<polygon points="625.50,451.50 636.50,440.50 664.50,440.50 653.50,451.50" fill="#3a8a0c" stroke="#000" stroke-width="1" stroke-linejoin="round" />
<polygon points="625.50,451.50 653.50,451.50 653.50,507.50 625.50,507.50" fill="#7cc62c" stroke="#000" stroke-width="1" stroke-linejoin="round" />
<polygon points="712.50,451.50 723.50,440.50 723.50,525.50 712.50,536.50" fill="#00045c" stroke="#000" stroke-width="1" stroke-linejoin="round" />
<polygon points="685.50,451.50 696.50,440.50 723.50,440.50 712.50,451.50" fill="#1c3a9c" stroke="#000" stroke-width="1" stroke-linejoin="round" />
<polygon points="685.50,451.50 712.50,451.50 712.50,536.50 685.50,536.50" fill="#5b7cdc" stroke="#000" stroke-width="1" stroke-linejoin="round" />
<polygon points="740.50,451.50 751.50,440.50 751.50,496.50 740.50,507.50" fill="#044400" stroke="#000" stroke-width="1" stroke-linejoin="round" />
<polygon points="712.50,451.50 723.50,440.50 751.50,440.50 740.50,451.50" fill="#3a8a0c" stroke="#000" stroke-width="1" stroke-linejoin="round" />
<polygon points="712.50,451.50 740.50,451.50 740.50,507.50 712.50,507.50" fill="#7cc62c" stroke="#000" stroke-width="1" stroke-linejoin="round" />
<line x1="54.00" y1="451.00" x2="54.00" y2="565.00" stroke="#000" stroke-width="2" />
<line x1="53.00" y1="564.00" x2="766.50" y2="564.00" stroke="#000" stroke-width="2" />
<line x1="50.00" y1="451.50" x2="55.00" y2="451.50" stroke="#808080" stroke-width="1" />
<text x="46.80" y="454.80" font-size="11" text-anchor="end" font-weight="normal" fill="#000" >0</text>
<line x1="50.00" y1="465.50" x2="55.00" y2="465.50" stroke="#808080" stroke-width="1" />
<text x="46.80" y="468.80" font-size="11" text-anchor="end" font-weight="normal" fill="#000" >0,5</text>
<line x1="50.00" y1="479.50" x2="55.00" y2="479.50" stroke="#808080" stroke-width="1" />
<text x="46.80" y="482.80" font-size="11" text-anchor="end" font-weight="normal" fill="#000" >1</text>
<line x1="50.00" y1="493.50" x2="55.00" y2="493.50" stroke="#808080" stroke-width="1" />
<text x="46.80" y="496.80" font-size="11" text-anchor="end" font-weight="normal" fill="#000" >1,5</text>
<line x1="50.00" y1="507.50" x2="55.00" y2="507.50" stroke="#808080" stroke-width="1" />
<text x="46.80" y="510.80" font-size="11" text-anchor="end" font-weight="normal" fill="#000" >2</text>
<line x1="50.00" y1="521.50" x2="55.00" y2="521.50" stroke="#808080" stroke-width="1" />
<text x="46.80" y="524.80" font-size="11" text-anchor="end" font-weight="normal" fill="#000" >2,5</text>
<line x1="50.00" y1="536.50" x2="55.00" y2="536.50" stroke="#808080" stroke-width="1" />
<text x="46.80" y="539.80" font-size="11" text-anchor="end" font-weight="normal" fill="#000" >3</text>
<line x1="50.00" y1="550.50" x2="55.00" y2="550.50" stroke="#808080" stroke-width="1" />
<text x="46.80" y="553.80" font-size="11" text-anchor="end" font-weight="normal" fill="#000" >3,5</text>
<line x1="50.00" y1="564.50" x2="55.00" y2="564.50" stroke="#808080" stroke-width="1" />
<text x="46.80" y="567.80" font-size="11" text-anchor="end" font-weight="normal" fill="#000" >4</text>
<line x1="52.00" y1="454.50" x2="54.00" y2="454.50" stroke="#000" stroke-width="1" />
<line x1="52.00" y1="457.50" x2="54.00" y2="457.50" stroke="#000" stroke-width="1" />
<line x1="52.00" y1="459.50" x2="54.00" y2="459.50" stroke="#000" stroke-width="1" />
<line x1="52.00" y1="462.50" x2="54.00" y2="462.50" stroke="#000" stroke-width="1" />
<line x1="52.00" y1="468.50" x2="54.00" y2="468.50" stroke="#000" stroke-width="1" />
<line x1="52.00" y1="471.50" x2="54.00" y2="471.50" stroke="#000" stroke-width="1" />
<line x1="52.00" y1="473.50" x2="54.00" y2="473.50" stroke="#000" stroke-width="1" />
<line x1="52.00" y1="476.50" x2="54.00" y2="476.50" stroke="#000" stroke-width="1" />
<line x1="52.00" y1="482.50" x2="54.00" y2="482.50" stroke="#000" stroke-width="1" />
<line x1="52.00" y1="485.50" x2="54.00" y2="485.50" stroke="#000" stroke-width="1" />
<line x1="52.00" y1="487.50" x2="54.00" y2="487.50" stroke="#000" stroke-width="1" />
<line x1="52.00" y1="490.50" x2="54.00" y2="490.50" stroke="#000" stroke-width="1" />
<line x1="52.00" y1="496.50" x2="54.00" y2="496.50" stroke="#000" stroke-width="1" />
<line x1="52.00" y1="498.50" x2="54.00" y2="498.50" stroke="#000" stroke-width="1" />
<line x1="52.00" y1="501.50" x2="54.00" y2="501.50" stroke="#000" stroke-width="1" />
<line x1="52.00" y1="504.50" x2="54.00" y2="504.50" stroke="#000" stroke-width="1" />
<line x1="52.00" y1="509.50" x2="54.00" y2="509.50" stroke="#000" stroke-width="1" />
<line x1="52.00" y1="512.50" x2="54.00" y2="512.50" stroke="#000" stroke-width="1" />
<line x1="52.00" y1="515.50" x2="54.00" y2="515.50" stroke="#000" stroke-width="1" />
<line x1="52.00" y1="518.50" x2="54.00" y2="518.50" stroke="#000" stroke-width="1" />
<line x1="52.00" y1="524.50" x2="54.00" y2="524.50" stroke="#000" stroke-width="1" />
<line x1="52.00" y1="527.50" x2="54.00" y2="527.50" stroke="#000" stroke-width="1" />
<line x1="52.00" y1="530.50" x2="54.00" y2="530.50" stroke="#000" stroke-width="1" />
<line x1="52.00" y1="533.50" x2="54.00" y2="533.50" stroke="#000" stroke-width="1" />
<line x1="52.00" y1="538.50" x2="54.00" y2="538.50" stroke="#000" stroke-width="1" />
<line x1="52.00" y1="541.50" x2="54.00" y2="541.50" stroke="#000" stroke-width="1" />
<line x1="52.00" y1="544.50" x2="54.00" y2="544.50" stroke="#000" stroke-width="1" />
<line x1="52.00" y1="547.50" x2="54.00" y2="547.50" stroke="#000" stroke-width="1" />
<line x1="52.00" y1="552.50" x2="54.00" y2="552.50" stroke="#000" stroke-width="1" />
<line x1="52.00" y1="555.50" x2="54.00" y2="555.50" stroke="#000" stroke-width="1" />
<line x1="52.00" y1="558.50" x2="54.00" y2="558.50" stroke="#000" stroke-width="1" />
<line x1="52.00" y1="561.50" x2="54.00" y2="561.50" stroke="#000" stroke-width="1" />
<line x1="108.50" y1="563.00" x2="108.50" y2="569.00" stroke="#808080" stroke-width="1" />
<text x="107.20" y="582.00" font-size="11" text-anchor="middle" font-weight="normal" fill="#000" >1</text>
<line x1="130.50" y1="565.00" x2="130.50" y2="567.50" stroke="#000" stroke-width="1" />
<line x1="152.50" y1="565.00" x2="152.50" y2="567.50" stroke="#000" stroke-width="1" />
<line x1="173.50" y1="565.00" x2="173.50" y2="567.50" stroke="#000" stroke-width="1" />
<line x1="87.50" y1="565.00" x2="87.50" y2="567.50" stroke="#000" stroke-width="1" />
<line x1="65.50" y1="565.00" x2="65.50" y2="567.50" stroke="#000" stroke-width="1" />
<line x1="195.50" y1="563.00" x2="195.50" y2="569.00" stroke="#808080" stroke-width="1" />
<text x="194.20" y="582.00" font-size="11" text-anchor="middle" font-weight="normal" fill="#000" >2</text>
<line x1="217.50" y1="565.00" x2="217.50" y2="567.50" stroke="#000" stroke-width="1" />
<line x1="238.50" y1="565.00" x2="238.50" y2="567.50" stroke="#000" stroke-width="1" />
<line x1="259.50" y1="565.00" x2="259.50" y2="567.50" stroke="#000" stroke-width="1" />
<line x1="281.50" y1="563.00" x2="281.50" y2="569.00" stroke="#808080" stroke-width="1" />
<text x="280.20" y="582.00" font-size="11" text-anchor="middle" font-weight="normal" fill="#000" >3</text>
<line x1="303.50" y1="565.00" x2="303.50" y2="567.50" stroke="#000" stroke-width="1" />
<line x1="324.50" y1="565.00" x2="324.50" y2="567.50" stroke="#000" stroke-width="1" />
<line x1="345.50" y1="565.00" x2="345.50" y2="567.50" stroke="#000" stroke-width="1" />
<line x1="367.50" y1="563.00" x2="367.50" y2="569.00" stroke="#808080" stroke-width="1" />
<text x="366.20" y="582.00" font-size="11" text-anchor="middle" font-weight="normal" fill="#000" >4</text>
<line x1="389.50" y1="565.00" x2="389.50" y2="567.50" stroke="#000" stroke-width="1" />
<line x1="410.50" y1="565.00" x2="410.50" y2="567.50" stroke="#000" stroke-width="1" />
<line x1="431.50" y1="565.00" x2="431.50" y2="567.50" stroke="#000" stroke-width="1" />
<line x1="453.50" y1="563.00" x2="453.50" y2="569.00" stroke="#808080" stroke-width="1" />
<text x="452.20" y="582.00" font-size="11" text-anchor="middle" font-weight="normal" fill="#000" >5</text>
<line x1="475.50" y1="565.00" x2="475.50" y2="567.50" stroke="#000" stroke-width="1" />
<line x1="497.50" y1="565.00" x2="497.50" y2="567.50" stroke="#000" stroke-width="1" />
<line x1="518.50" y1="565.00" x2="518.50" y2="567.50" stroke="#000" stroke-width="1" />
<line x1="540.50" y1="563.00" x2="540.50" y2="569.00" stroke="#808080" stroke-width="1" />
<text x="539.20" y="582.00" font-size="11" text-anchor="middle" font-weight="normal" fill="#000" >6</text>
<line x1="561.50" y1="565.00" x2="561.50" y2="567.50" stroke="#000" stroke-width="1" />
<line x1="582.50" y1="565.00" x2="582.50" y2="567.50" stroke="#000" stroke-width="1" />
<line x1="604.50" y1="565.00" x2="604.50" y2="567.50" stroke="#000" stroke-width="1" />
<line x1="625.50" y1="563.00" x2="625.50" y2="569.00" stroke="#808080" stroke-width="1" />
<text x="624.20" y="582.00" font-size="11" text-anchor="middle" font-weight="normal" fill="#000" >7</text>
<line x1="647.50" y1="565.00" x2="647.50" y2="567.50" stroke="#000" stroke-width="1" />
<line x1="669.50" y1="565.00" x2="669.50" y2="567.50" stroke="#000" stroke-width="1" />
<line x1="690.50" y1="565.00" x2="690.50" y2="567.50" stroke="#000" stroke-width="1" />
<line x1="712.50" y1="563.00" x2="712.50" y2="569.00" stroke="#808080" stroke-width="1" />
<text x="711.20" y="582.00" font-size="11" text-anchor="middle" font-weight="normal" fill="#000" >8</text>
<line x1="734.50" y1="565.00" x2="734.50" y2="567.50" stroke="#000" stroke-width="1" />
<line x1="755.50" y1="565.00" x2="755.50" y2="567.50" stroke="#000" stroke-width="1" />
<text x="392.50" y="427.50" font-size="11.5" text-anchor="middle" font-weight="bold" fill="#000" >Kazalniki Kralicek po mesecih</text>
<defs><linearGradient id="lg2" x1="0" y1="0" x2="0" y2="1"><stop offset="0" stop-color="#ececec"/><stop offset="1" stop-color="#e4e4e4"/></linearGradient></defs>
<rect x="837" y="488" width="158.5" height="32" fill="#c4cace" opacity="0.9" filter="url(#blur1)"/>
<rect x="834.5" y="485.5" width="158.5" height="32" fill="url(#lg2)" stroke="#808080" stroke-width="1"/>
<defs><linearGradient id="lg2s0" x1="0" y1="0" x2="1" y2="1"><stop offset="0" stop-color="#a8c0f4"/><stop offset="1" stop-color="#5078e0"/></linearGradient></defs>
<rect x="841" y="491" width="9" height="9" fill="#a0a4a8" opacity="0.8"/>
<rect x="840" y="490" width="9" height="9" fill="url(#lg2s0)"/>
<text x="853.50" y="498.30" font-size="10.9" text-anchor="start" font-weight="normal" fill="#000" >Ocena finančne stabilnosti</text>
<defs><linearGradient id="lg2s1" x1="0" y1="0" x2="1" y2="1"><stop offset="0" stop-color="#b0e080"/><stop offset="1" stop-color="#6cc028"/></linearGradient></defs>
<rect x="841" y="505" width="9" height="9" fill="#a0a4a8" opacity="0.8"/>
<rect x="840" y="504" width="9" height="9" fill="url(#lg2s1)"/>
<text x="853.50" y="512.30" font-size="10.9" text-anchor="start" font-weight="normal" fill="#000" >Ocena celot. usp. in dobičk.</text>
</svg>
<div style="left:284px;top:595px;line-height:14px;font-size:10.73px">Vrednosti: 1 - odlično, 2 - zelo dobro, 3 - dobro, 4 - slabo, 5- nevarnost plačilne nesposobnosti</div>
</div></body></html>
